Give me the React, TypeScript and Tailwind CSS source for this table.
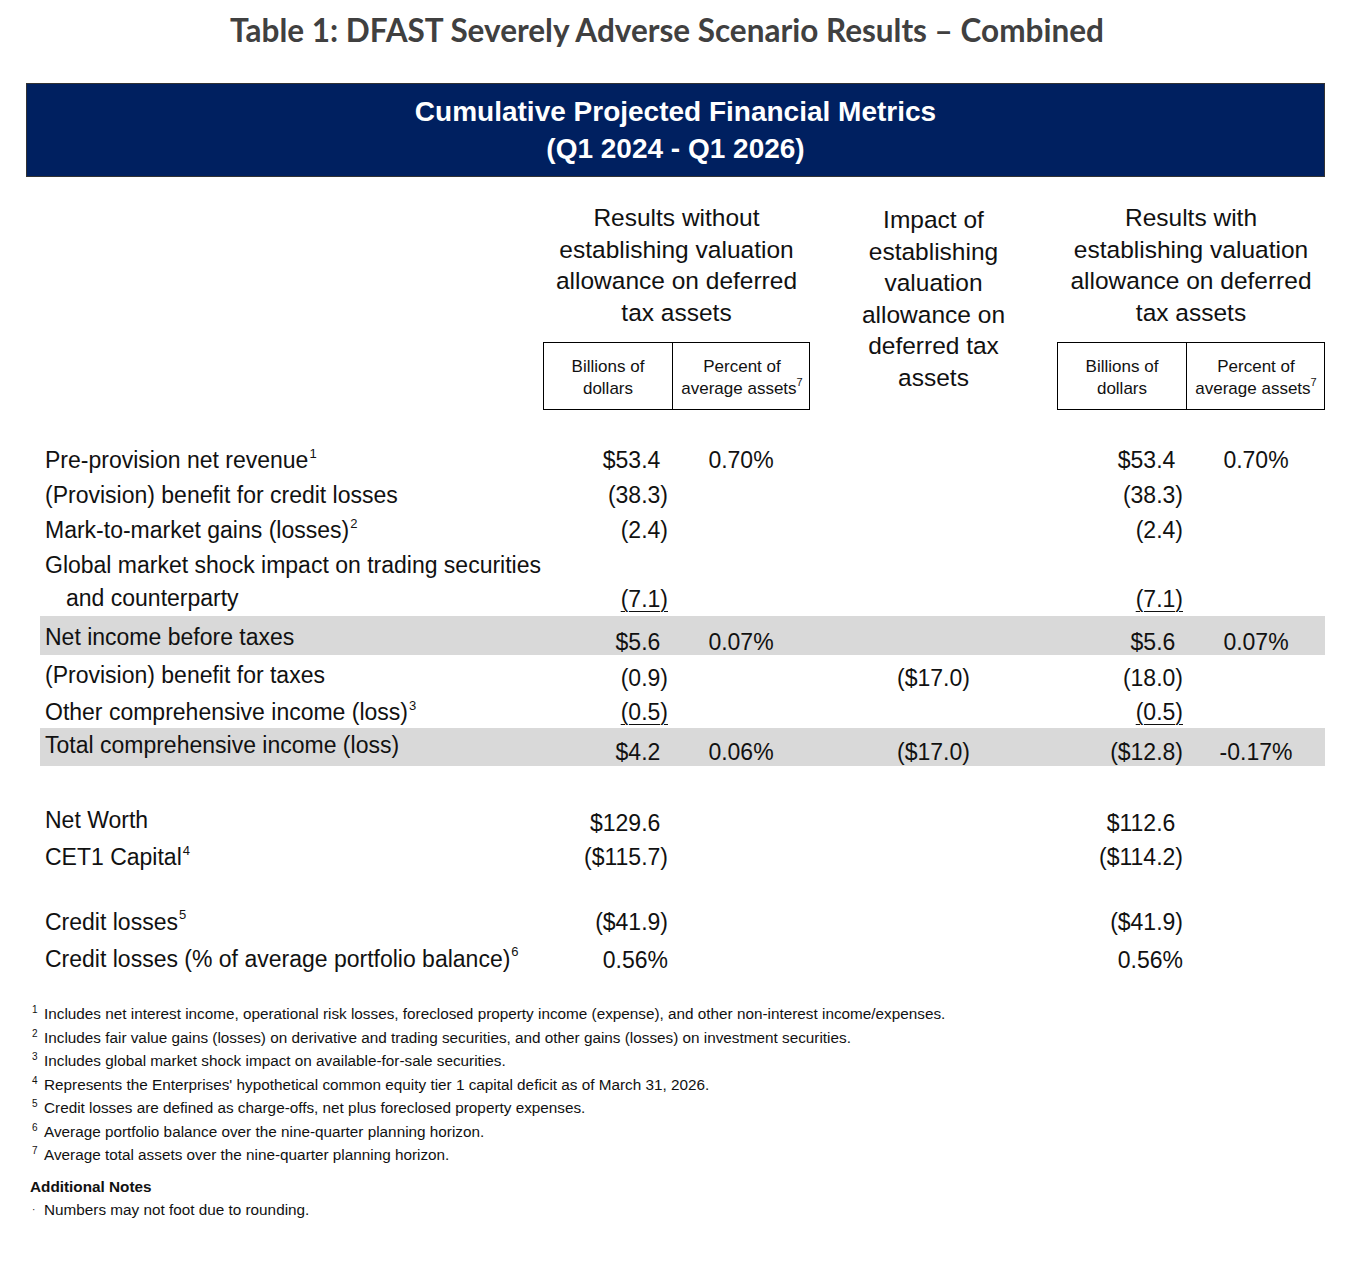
import type { ReactNode } from "react";

const COLS = "grid grid-cols-[503px_129px_138px_247px_130px_138px]";

// trailing invisible paren keeps positive numbers aligned with (x.x) ones
const Pos = ({ v }: { v: string }) => (
  <span>
    {v}
    <span className="invisible">)</span>
  </span>
);

const Sup = ({ n }: { n: string }) => (
  <sup className="text-[13px] top-[-0.8em] ml-[1px]">{n}</sup>
);

type RowProps = {
  label: ReactNode;
  b1?: ReactNode;
  p1?: string;
  c2?: string;
  b3?: ReactNode;
  p3?: string;
  gray?: boolean;
  h: string;
  lp?: string;
  vp?: string;
};

const Row = ({ label, b1, p1, c2, b3, p3, gray, h, lp = "", vp = "" }: RowProps) => (
  <div className={`${COLS} ${h} ${gray ? "bg-[#d9d9d9]" : ""}`}>
    <div className={`flex items-center pl-[5px] ${lp}`}>{label}</div>
    <div className={`flex items-center justify-end pr-[4px] ${vp}`}>{b1}</div>
    <div className={`flex items-center justify-center ${vp}`}>{p1}</div>
    <div className={`flex items-center justify-center ${vp}`}>{c2}</div>
    <div className={`flex items-center justify-end pr-[4px] ${vp}`}>{b3}</div>
    <div className={`flex items-center justify-center ${vp}`}>{p3}</div>
  </div>
);

const UnitBox = () => (
  <div className="mt-[14px] grid grid-cols-[129px_138px] h-[68px] border-[1.5px] border-black text-[17px] leading-[22px] text-center">
    <div className="flex items-center justify-center border-r-[1.5px] border-black pt-[3px]">
      Billions of
      <br />
      dollars
    </div>
    <div className="flex items-center justify-center pt-[3px]">
      <span>
        Percent of
        <br />
        average assets<sup className="text-[11px] top-[-0.7em]">7</sup>
      </span>
    </div>
  </div>
);

const U = ({ children }: { children: ReactNode }) => (
  <span className="underline decoration-1 underline-offset-[4px]">{children}</span>
);

const notes = [
  "Includes net interest income, operational risk losses, foreclosed property income (expense), and other non-interest income/expenses.",
  "Includes fair value gains (losses) on derivative and trading securities, and other gains (losses) on investment securities.",
  "Includes global market shock impact on available-for-sale securities.",
  "Represents the Enterprises' hypothetical common equity tier 1 capital deficit as of March 31, 2026.",
  "Credit losses are defined as charge-offs, net plus foreclosed property expenses.",
  "Average portfolio balance over the nine-quarter planning horizon.",
  "Average total assets over the nine-quarter planning horizon.",
];

export default function App() {
  return (
    <div className="w-[1356px] min-h-[1266px] bg-white pl-[26px] font-['Liberation_Sans',Arial,sans-serif] text-[#111]">
      <div className="w-[1299px]">
        <h1 className="pt-[10px] pr-[17px] text-center font-['Lato',sans-serif] font-bold text-[31.5px] leading-[40px] text-[#404040]">
          Table 1: DFAST Severely Adverse Scenario Results – Combined
        </h1>

        <div className="mt-[33px] h-[94px] bg-[#002060] border border-[#333] flex flex-col items-center justify-center text-white font-bold text-[28px] leading-[37px]">
          <div>Cumulative Projected Financial Metrics</div>
          <div>(Q1 2024 - Q1 2026)</div>
        </div>

        <div className="ml-[14px]">
          {/* column headers */}
          <div className={`${COLS} mt-[25px] text-[24.5px] leading-[31.5px] text-center`}>
            <div />
            <div className="col-span-2">
              <div>
                Results without
                <br />
                establishing valuation
                <br />
                allowance on deferred
                <br />
                tax assets
              </div>
              <UnitBox />
            </div>
            <div className="pt-[2px]">
              Impact of
              <br />
              establishing
              <br />
              valuation
              <br />
              allowance on
              <br />
              deferred tax
              <br />
              assets
            </div>
            <div className="col-span-2">
              <div>
                Results with
                <br />
                establishing valuation
                <br />
                allowance on deferred
                <br />
                tax assets
              </div>
              <UnitBox />
            </div>
          </div>

          {/* body */}
          <div className="mt-[33px] text-[23px]">
            <Row
              h="h-[35px]"
              label={<span>Pre-provision net revenue<Sup n="1" /></span>}
              b1={<Pos v="$53.4" />}
              p1="0.70%"
              b3={<Pos v="$53.4" />}
              p3="0.70%"
            />
            <Row h="h-[35px]" label="(Provision) benefit for credit losses" b1="(38.3)" b3="(38.3)" />
            <Row
              h="h-[35px]"
              label={<span>Mark-to-market gains (losses)<Sup n="2" /></span>}
              b1="(2.4)"
              b3="(2.4)"
            />
            <div className={`${COLS} h-[68px]`}>
              <div className="pl-[5px] pt-[0.5px] leading-[33px]">
                <div>Global market shock impact on trading securities</div>
                <div className="pl-[21px]">and counterparty</div>
              </div>
              <div className="flex items-end justify-end pr-[4px] leading-[33px] pb-[0.5px]">
                <U>(7.1)</U>
              </div>
              <div />
              <div />
              <div className="flex items-end justify-end pr-[4px] leading-[33px] pb-[0.5px]">
                <U>(7.1)</U>
              </div>
              <div />
            </div>
            <Row
              gray
              h="h-[39px]"
              lp="pb-[2px]"
              vp="pt-[9px]"
              label="Net income before taxes"
              b1={<Pos v="$5.6" />}
              p1="0.07%"
              b3={<Pos v="$5.6" />}
              p3="0.07%"
            />
            <Row
              h="h-[38px]"
              vp="pt-[6px]"
              label="(Provision) benefit for taxes"
              b1="(0.9)"
              c2="($17.0)"
              b3="(18.0)"
            />
            <Row
              h="h-[35px]"
              lp="pt-[2px]"
              vp="pt-[2px]"
              label={<span>Other comprehensive income (loss)<Sup n="3" /></span>}
              b1={<U>(0.5)</U>}
              b3={<U>(0.5)</U>}
            />
            <Row
              gray
              h="h-[38px]"
              lp="pb-[8px]"
              vp="pt-[5px]"
              label="Total comprehensive income (loss)"
              b1={<Pos v="$4.2" />}
              p1="0.06%"
              c2="($17.0)"
              b3="($12.8)"
              p3="-0.17%"
            />

            <div className="mt-[34px]">
              <Row h="h-[40px]" vp="pt-[6px]" label="Net Worth" b1={<Pos v="$129.6" />} b3={<Pos v="$112.6" />} />
              <Row
                h="h-[35px]"
                label={<span>CET1 Capital<Sup n="4" /></span>}
                b1="($115.7)"
                b3="($114.2)"
              />
            </div>

            <div className="mt-[29px]">
              <Row
                h="h-[36px]"
                label={<span>Credit losses<Sup n="5" /></span>}
                b1="($41.9)"
                b3="($41.9)"
              />
              <Row
                h="h-[35px]"
                vp="pt-[3px]"
                label={<span>Credit losses (% of average portfolio balance)<Sup n="6" /></span>}
                b1="0.56%"
                b3="0.56%"
              />
            </div>
          </div>
        </div>

        {/* footnotes */}
        <div className="mt-[27px] pl-[6px] text-[15.3px] leading-[23.5px] text-[#111]">
          {notes.map((n, i) => (
            <div key={i} className="flex">
              <span className="w-[12px] shrink-0 text-[10px] leading-[16px]">{i + 1}</span>
              <span>{n}</span>
            </div>
          ))}
          <div className="mt-[8px] -ml-[2px] font-bold">Additional Notes</div>
          <div className="flex">
            <span className="w-[12px] shrink-0 text-[10px]">·</span>
            <span>Numbers may not foot due to rounding.</span>
          </div>
        </div>
      </div>
    </div>
  );
}
